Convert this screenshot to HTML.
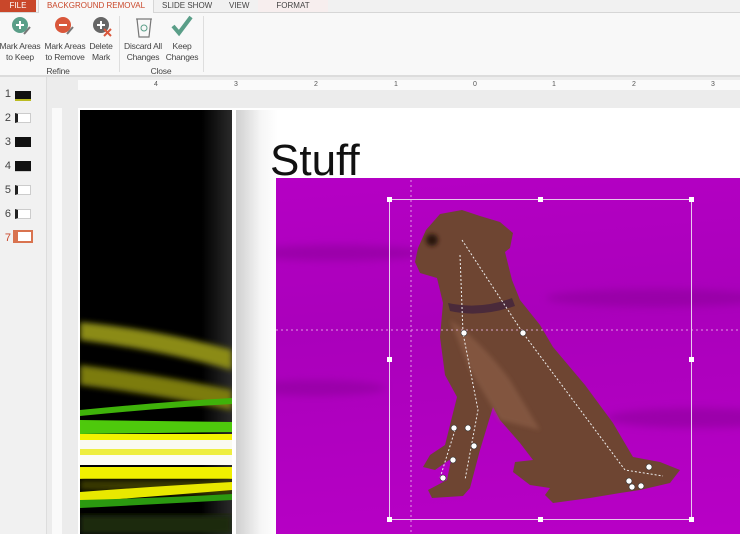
<!DOCTYPE html>
<html><head><style>
body{margin:0;width:740px;height:534px;overflow:hidden;background:#e6e6e6;font-family:"Liberation Sans",sans-serif;position:relative}
.a{position:absolute}
.t{font-size:8.5px;color:#444;text-align:center;line-height:11px;white-space:nowrap;letter-spacing:-0.2px}
</style></head><body>
<!-- tab bar -->
<div class="a" style="left:0;top:0;width:740px;height:12px;background:#f1f1f1;border-bottom:1px solid #d6d6d6"></div>
<div class="a" style="left:0;top:0;width:36px;height:12px;background:#c9472a;color:#fff;font-size:8px;line-height:11px;text-align:center">FILE</div>
<div class="a" style="left:38px;top:0;width:114px;height:13px;background:#f8f8f8;border:1px solid #d6d6d6;border-top:0;border-bottom:0;color:#c9472a;font-size:8px;line-height:11px;text-align:center">BACKGROUND REMOVAL</div>
<div class="a" style="left:162px;top:0;font-size:8px;line-height:11px;color:#444">SLIDE SHOW</div>
<div class="a" style="left:229px;top:0;font-size:8px;line-height:11px;color:#444">VIEW</div>
<div class="a" style="left:258px;top:0;width:70px;height:12px;background:#f7eeee;font-size:8px;line-height:11px;color:#444;text-align:center">FORMAT</div>
<!-- ribbon -->
<div class="a" style="left:0;top:13px;width:740px;height:62px;background:#f8f8f8;border-bottom:2px solid #dcdcdc"></div>
<svg class="a" style="left:0;top:14px" width="210" height="26">
<circle cx="20" cy="11" r="8" fill="#5a9e88"/><path d="M16 11h8M20 7v8" stroke="#fff" stroke-width="2"/><path d="M24 20l6-7" stroke="#777" stroke-width="2"/>
<circle cx="63" cy="11" r="8" fill="#d9573b"/><path d="M59 11h8" stroke="#fff" stroke-width="2"/><path d="M67 20l6-7" stroke="#777" stroke-width="2"/>
<circle cx="101" cy="11" r="8" fill="#666"/><path d="M97 11h8M101 7v8" stroke="#fff" stroke-width="2"/><path d="M104 15l7 7M111 15l-7 7" stroke="#d9573b" stroke-width="2"/>
<path d="M137 5h14l-2 18h-10z" fill="none" stroke="#777" stroke-width="1.2"/><path d="M136 5h16" stroke="#777"/><circle cx="144" cy="14" r="3" fill="none" stroke="#5a9e88"/>
<path d="M173 12l6 7 12-16" fill="none" stroke="#5a9e88" stroke-width="4"/>
</svg>
<div class="a t" style="left:-2px;top:41px;width:44px">Mark Areas<br>to Keep</div>
<div class="a t" style="left:43px;top:41px;width:44px">Mark Areas<br>to Remove</div>
<div class="a t" style="left:87px;top:41px;width:28px">Delete<br>Mark</div>
<div class="a t" style="left:45px;top:66px;width:26px">Refine</div>
<div class="a" style="left:119px;top:16px;width:1px;height:56px;background:#dedede"></div>
<div class="a t" style="left:121px;top:41px;width:44px">Discard All<br>Changes</div>
<div class="a t" style="left:164px;top:41px;width:36px">Keep<br>Changes</div>
<div class="a t" style="left:148px;top:66px;width:26px">Close</div>
<div class="a" style="left:203px;top:16px;width:1px;height:56px;background:#dedede"></div>
<!-- left pane -->
<div class="a" style="left:0;top:77px;width:46px;height:457px;background:#f1f1f1;border-right:1px solid #ddd"></div>
<div class="a" style="left:0;top:82px;width:11px;font-size:11px;line-height:24px;color:#444;text-align:right">1<br>2<br>3<br>4<br>5<br>6<br><span style="color:#c9472a">7</span></div>
<div class="a" style="left:15px;top:91px;width:16px;height:8px;background:#111;border-bottom:2px solid #bb2"></div>
<div class="a" style="left:15px;top:113px;width:16px;height:10px;background:#fff;border:1px solid #ccc;box-sizing:border-box;border-left:3px solid #222"></div>
<div class="a" style="left:15px;top:137px;width:16px;height:10px;background:#111"></div>
<div class="a" style="left:15px;top:161px;width:16px;height:10px;background:#111;border-bottom:1px solid #ccc"></div>
<div class="a" style="left:15px;top:185px;width:16px;height:10px;background:#fff;border:1px solid #ccc;box-sizing:border-box;border-left:3px solid #222"></div>
<div class="a" style="left:15px;top:209px;width:16px;height:10px;background:#fff;border:1px solid #ccc;box-sizing:border-box;border-left:3px solid #222"></div>
<div class="a" style="left:13px;top:230px;width:20px;height:13px;border:2px solid #d9734f;box-sizing:border-box;background:#fff;border-left:5px solid #d9734f"></div>
<!-- editing area -->
<div class="a" style="left:47px;top:77px;width:693px;height:457px;background:#ececec"></div>
<div class="a" style="left:78px;top:80px;width:662px;height:10px;background:#fafafa;font-size:7px;line-height:10px;color:#555">
<span class="a" style="left:76px">4</span><span class="a" style="left:156px">3</span><span class="a" style="left:236px">2</span><span class="a" style="left:316px">1</span><span class="a" style="left:395px">0</span><span class="a" style="left:474px">1</span><span class="a" style="left:554px">2</span><span class="a" style="left:633px">3</span></div>
<div class="a" style="left:52px;top:108px;width:10px;height:426px;background:#fafafa"></div>
<!-- slide -->
<div class="a" style="left:78px;top:108px;width:662px;height:426px;background:#fff"></div>
<div class="a" style="left:80px;top:110px;width:152px;height:424px;background:linear-gradient(90deg,#000 0%,#000 80%,#2a2a2a 100%)"></div>
<svg class="a" style="left:80px;top:310px" width="152" height="224">
<defs><filter id="b"><feGaussianBlur stdDeviation="3"/></filter></defs>
<g filter="url(#b)"><path d="M0 12 Q80 20 152 40 L152 60 Q80 40 0 30z" fill="#8b8b18"/><path d="M0 55 Q80 65 152 80 L152 100 Q80 85 0 75z" fill="#7c7c10"/></g>
<path d="M0 100 Q80 92 152 88 L152 94 Q80 98 0 106z" fill="#3fb20a"/>
<path d="M0 110 L152 112 L152 122 L0 124z" fill="#4ec90c"/>
<rect y="124" width="152" height="6" fill="#f2f200"/>
<rect y="130" width="152" height="9" fill="#fafaf0"/>
<rect y="139" width="152" height="6" fill="#eeee40"/>
<rect y="145" width="152" height="10" fill="#fbfbf6"/>
<rect y="157" width="152" height="12" fill="#f0f000"/>
<path d="M0 170 L152 170 L152 186 L0 180z" fill="#3a3a00" filter="url(#b)"/>
<path d="M0 182 Q80 176 152 172 L152 180 Q80 186 0 192z" fill="#e8e800"/>
<path d="M0 190 Q80 188 152 184 L152 190 Q80 194 0 198z" fill="#2b9a10"/>
<rect y="205" width="152" height="19" fill="#1a2a08" filter="url(#b)"/>
</svg>
<div class="a" style="left:236px;top:110px;width:42px;height:424px;background:linear-gradient(90deg,#cfcfcf,#f6f6f6 60%,#fff)"></div>
<div class="a" style="left:270px;top:133px;font-size:44px;line-height:56px;color:#111">Stuff</div>
<!-- picture -->
<div class="a" style="left:276px;top:178px;width:464px;height:356px;background:linear-gradient(175deg,#b500c4,#aa00bb 40%,#b800c6)"></div>
<svg class="a" style="left:276px;top:178px" width="464" height="356">
<defs><filter id="c"><feGaussianBlur stdDeviation="4"/></filter><filter id="d"><feGaussianBlur stdDeviation="2"/></filter></defs>
<g filter="url(#c)" fill="#8e009c" opacity=".6"><ellipse cx="60" cy="75" rx="90" ry="8"/><ellipse cx="380" cy="120" rx="110" ry="9"/><ellipse cx="40" cy="210" rx="70" ry="8"/><ellipse cx="420" cy="240" rx="90" ry="10"/></g>
<g transform="translate(-276,-178)">
<path d="M415 262 L418 248 L426 230 L440 214 L462 210 L480 216 L500 222 L513 233 L510 248 L505 252 L512 280 L520 300 L540 325 L553 347 L585 385 L613 423 L633 457 L660 462 L680 470 L670 483 L640 490 L620 493 L590 498 L553 503 L545 495 L550 488 L530 485 L513 472 L515 462 L533 460 L520 443 L500 420 L493 407 L480 450 L470 488 L463 496 L432 498 L428 490 L447 480 L455 440 L452 458 L435 470 L423 467 L430 455 L445 445 L457 397 L445 375 L440 337 L443 303 L437 278 L420 273 Z" fill="#6e4532"/>
<g filter="url(#d)"><ellipse cx="432" cy="240" rx="6" ry="6" fill="#2a1810"/><path d="M450 320 Q480 340 510 380 L540 430 L500 420 L470 370 Z" fill="#8f6048" opacity=".6"/></g>
<path d="M448 303 Q480 310 512 298 L515 306 Q480 318 450 311 Z" fill="#4a2a3a"/>
<g fill="none" stroke="#eee" stroke-dasharray="2 2" stroke-width="1"><path d="M460 255 L463 333 L478 410 L465 480"/><path d="M462 240 L523 333 L625 470 L663 476"/><path d="M455 430 L440 478"/></g>
<path d="M276 330 H740 M411 110 V534" stroke="#f0c0f0" stroke-dasharray="2 3" opacity=".8"/>
<rect x="389.5" y="199.5" width="302" height="320" fill="none" stroke="#e8c8ec"/>
<g fill="#fff"><rect x="387" y="197" width="5" height="5"/><rect x="538" y="197" width="5" height="5"/><rect x="689" y="197" width="5" height="5"/><rect x="387" y="357" width="5" height="5"/><rect x="689" y="357" width="5" height="5"/><rect x="387" y="517" width="5" height="5"/><rect x="538" y="517" width="5" height="5"/><rect x="689" y="517" width="5" height="5"/></g>
<g fill="#fff" stroke="#333" stroke-width=".6"><circle cx="464" cy="333" r="3"/><circle cx="523" cy="333" r="3"/><circle cx="454" cy="428" r="3"/><circle cx="468" cy="428" r="3"/><circle cx="474" cy="446" r="3"/><circle cx="453" cy="460" r="3"/><circle cx="443" cy="478" r="3"/><circle cx="649" cy="467" r="3"/><circle cx="629" cy="481" r="3"/><circle cx="632" cy="487" r="3"/><circle cx="641" cy="486" r="3"/></g>
</g>
</svg>
</body></html>
